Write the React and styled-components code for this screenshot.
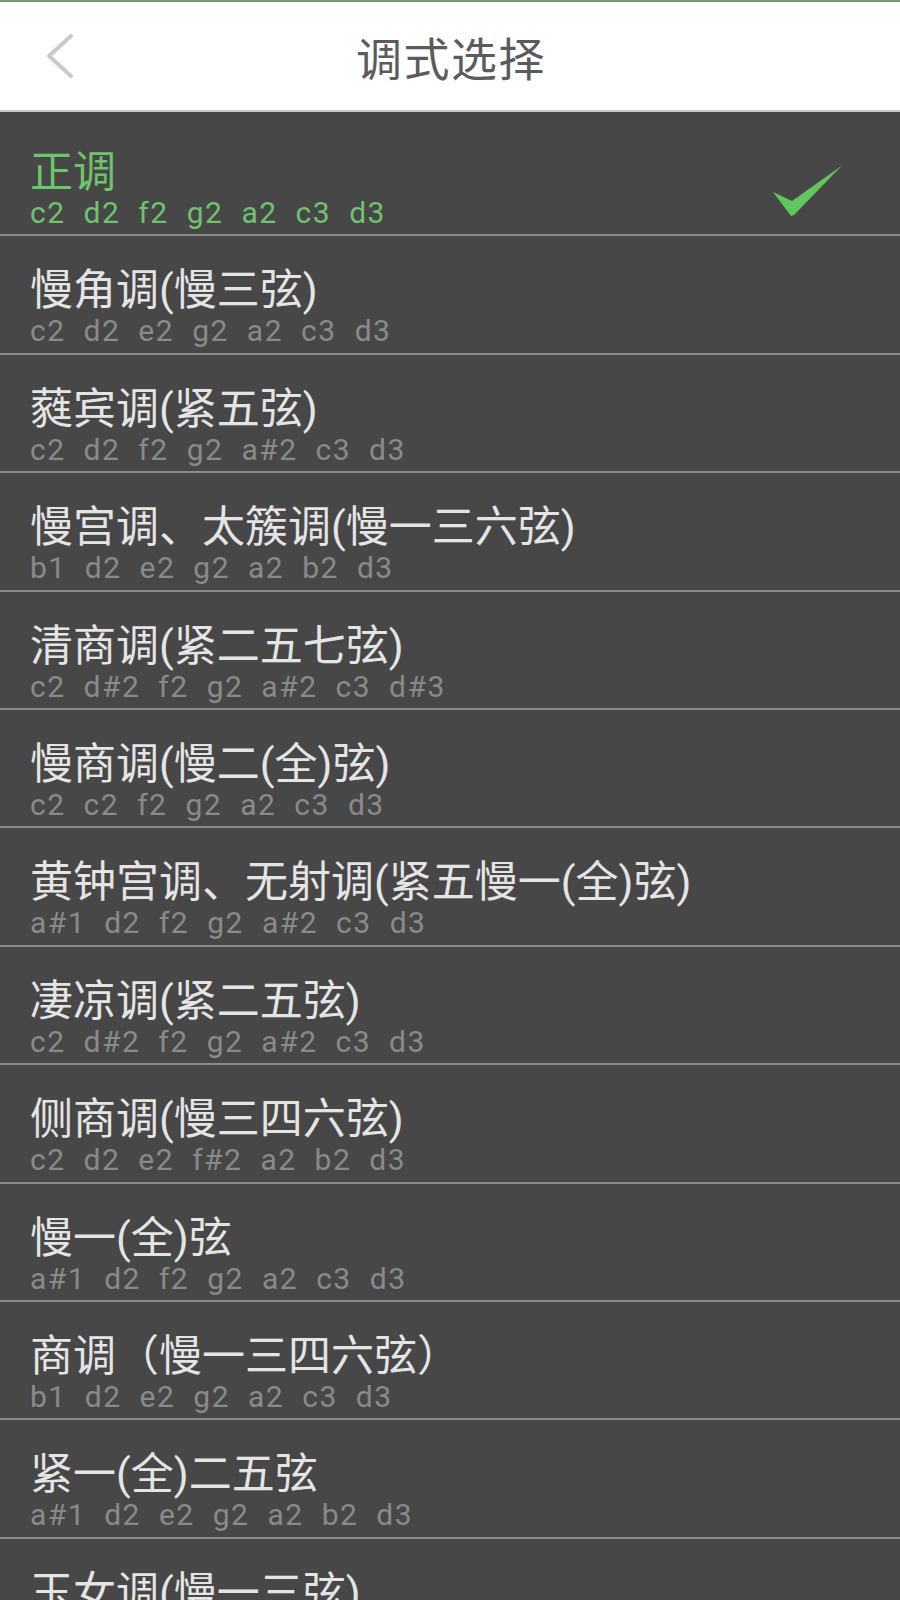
import React from 'react';
import styled, { createGlobalStyle } from 'styled-components';

const GlobalStyle = createGlobalStyle`
  html, body {
    margin: 0;
    padding: 0;
    background: #474747;
  }
  #root {
    width: 900px;
    height: 1600px;
    overflow: hidden;
  }
`;

const Page = styled.div`
  width: 900px;
  height: 1600px;
  background: #474747;
  font-family: Roboto, "Noto Sans CJK SC", sans-serif;
  border-top: 2px solid #7d9870;
  box-sizing: border-box;
`;

const Header = styled.header`
  height: 108px;
  background: #ffffff;
  border-bottom: 2px solid #c9c9c9;
  display: grid;
  grid-template-columns: 1fr auto 1fr;
  align-items: center;
`;

const BackButton = styled.button`
  justify-self: start;
  width: 40px;
  height: 48px;
  margin-left: 40px;
  padding: 0;
  border: none;
  background: transparent;
  display: flex;
  align-items: center;
  justify-content: center;
`;

const Title = styled.h1`
  margin: 0 0 0 2px;
  font-family: "Noto Sans CJK SC", sans-serif;
  font-size: 46px;
  font-weight: 400;
  color: #5b5b5b;
  letter-spacing: 1.5px;
`;

const List = styled.ul`
  list-style: none;
  margin: 0;
  padding: 6px 0 0;
`;

const Row = styled.li`
  height: 116.4px;
  border-bottom: 2px solid #8b8b8b;
  padding: 0 56px 0 30px;
  display: flex;
  align-items: flex-start;
  justify-content: space-between;
`;

const Texts = styled.div`
  display: flex;
  flex-direction: column;
  padding-top: 31px;
`;

const Name = styled.div`
  font-size: 43px;
  line-height: 46px;
  color: ${({ $active }) => ($active ? '#6ec46c' : '#e4e4e4')};
  white-space: nowrap;
`;

const Notes = styled.div`
  display: flex;
  gap: 18px;
  margin-top: 1px;
  font-family: Roboto, sans-serif;
  font-size: 30px;
  line-height: 34px;
  letter-spacing: 1.5px;
  color: ${({ $active }) => ($active ? '#6ec46c' : '#8a8a8a')};
`;

const Check = styled.svg`
  align-self: flex-end;
  margin-bottom: 15px;
  flex-shrink: 0;
`;

const modes = [
  { name: '正调', notes: 'c2 d2 f2 g2 a2 c3 d3' },
  { name: '慢角调(慢三弦)', notes: 'c2 d2 e2 g2 a2 c3 d3' },
  { name: '蕤宾调(紧五弦)', notes: 'c2 d2 f2 g2 a#2 c3 d3' },
  { name: '慢宫调、太簇调(慢一三六弦)', notes: 'b1 d2 e2 g2 a2 b2 d3' },
  { name: '清商调(紧二五七弦)', notes: 'c2 d#2 f2 g2 a#2 c3 d#3' },
  { name: '慢商调(慢二(全)弦)', notes: 'c2 c2 f2 g2 a2 c3 d3' },
  { name: '黄钟宫调、无射调(紧五慢一(全)弦)', notes: 'a#1 d2 f2 g2 a#2 c3 d3' },
  { name: '凄凉调(紧二五弦)', notes: 'c2 d#2 f2 g2 a#2 c3 d3' },
  { name: '侧商调(慢三四六弦)', notes: 'c2 d2 e2 f#2 a2 b2 d3' },
  { name: '慢一(全)弦', notes: 'a#1 d2 f2 g2 a2 c3 d3' },
  { name: '商调（慢一三四六弦）', notes: 'b1 d2 e2 g2 a2 c3 d3' },
  { name: '紧一(全)二五弦', notes: 'a#1 d2 e2 g2 a2 b2 d3' },
  { name: '玉女调(慢一三弦)', notes: 'b1 d2 e2 g2 a2 c3 d3' },
];

const App = () => {
  const selected = 0;

  return (
    <Page>
      <GlobalStyle />
      <Header>
        <BackButton aria-label="返回">
          <svg width="32" height="46" viewBox="0 0 32 46">
            <polyline
              points="27,3 5,23 27,43"
              fill="none"
              stroke="#cacaca"
              strokeWidth="4"
              strokeLinecap="round"
              strokeLinejoin="round"
            />
          </svg>
        </BackButton>
        <Title>调式选择</Title>
        <div />
      </Header>

      <List>
        {modes.map((mode, i) => {
          const active = i === selected;
          return (
            <Row key={mode.name}>
              <Texts>
                <Name $active={active}>{mode.name}</Name>
                <Notes $active={active}>
                  {mode.notes.split(' ').map((n, j) => (
                    <span key={j}>{n}</span>
                  ))}
                </Notes>
              </Texts>
              {active && (
                <Check width="74" height="56" viewBox="0 0 74 56">
                  <polygon points="3,29 22,38 72,2.5 24,52 21,53" fill="#5fc85d" />
                </Check>
              )}
            </Row>
          );
        })}
      </List>
    </Page>
  );
};

export default App;
